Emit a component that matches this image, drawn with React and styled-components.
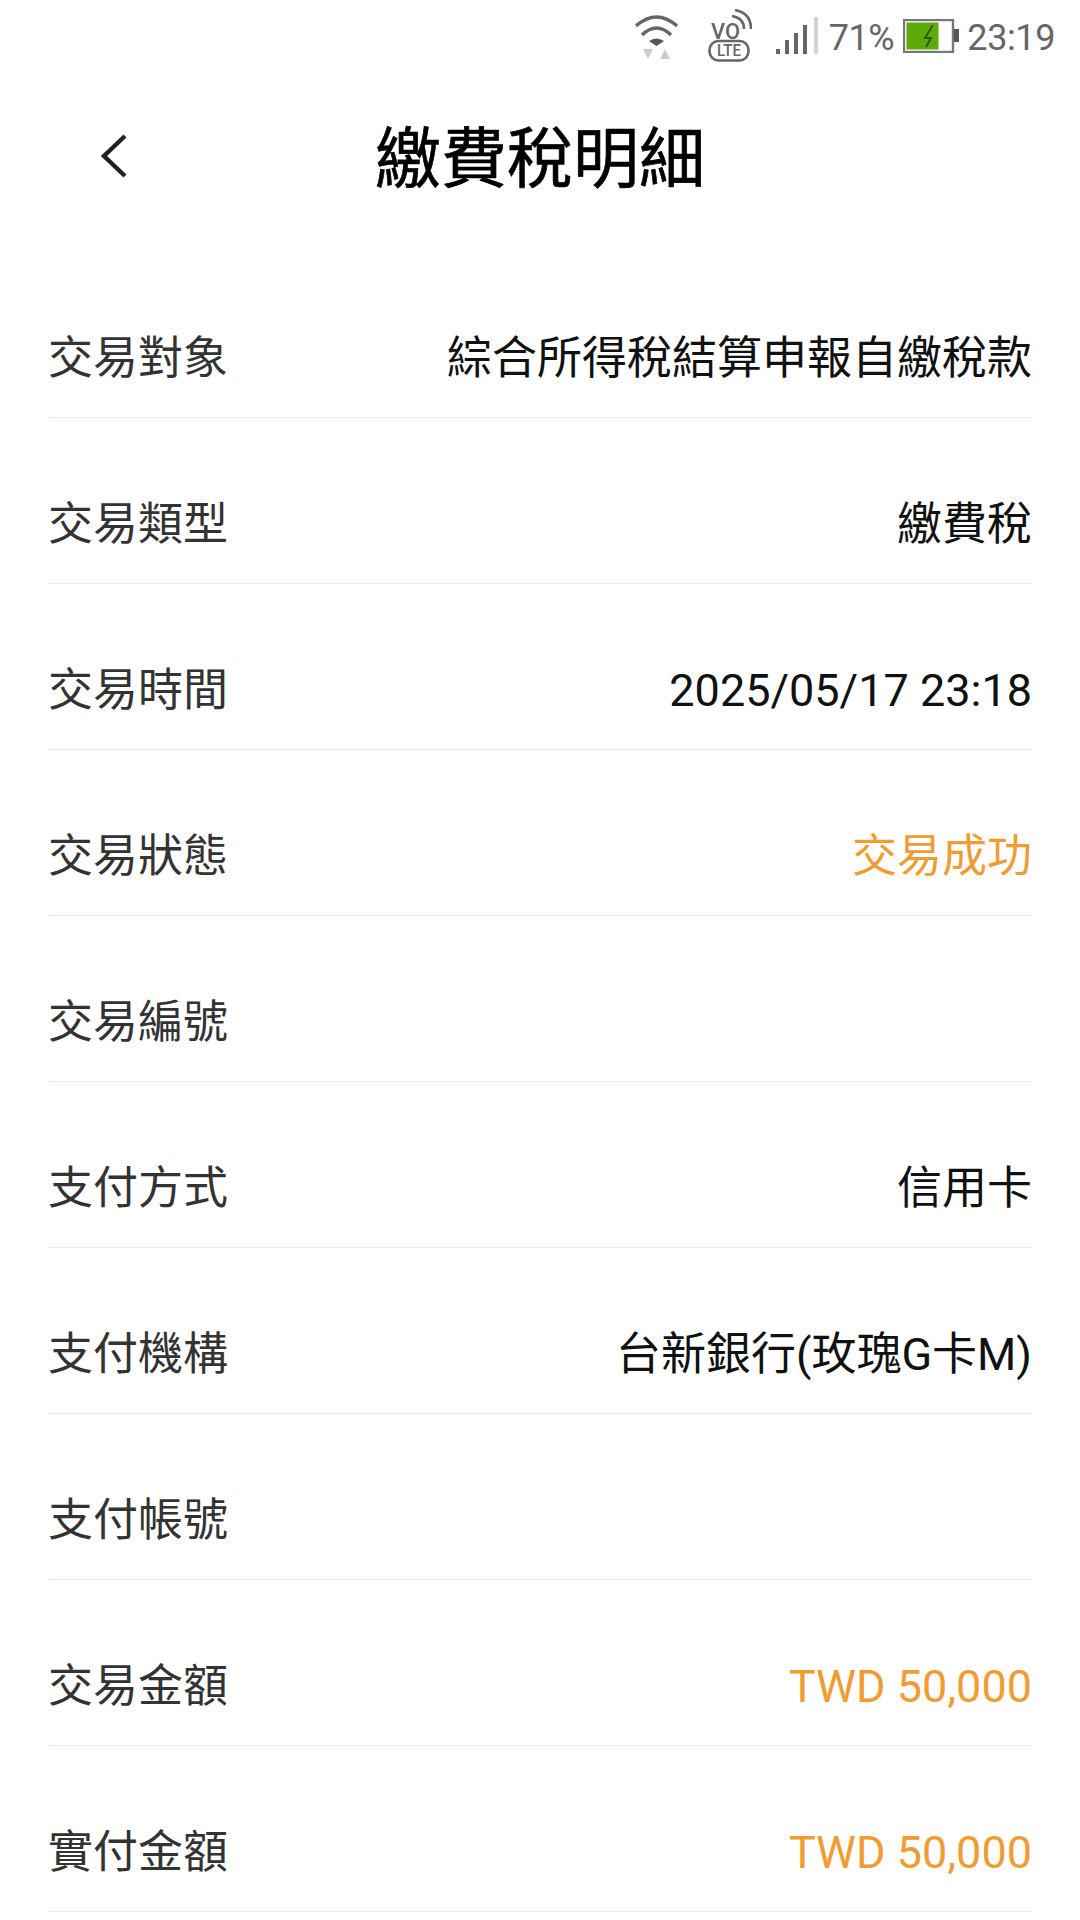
import React from "react";
import styled, { createGlobalStyle } from "styled-components";

const Global = createGlobalStyle`
  html, body { margin: 0; padding: 0; background: #fff; }
  body { font-family: Roboto, "Noto Sans CJK TC", sans-serif; }
`;
const Page = styled.div`
  width: 1080px;
  height: 1920px;
  overflow: hidden;
  background: #fff;
  display: flex;
  flex-direction: column;
`;
const StatusBar = styled.div`
  height: 64px;
  padding-right: 25px;
  display: flex;
  justify-content: flex-end;
  align-items: flex-start;
  color: #666;
  font-size: 36px;
`;
const StatusIcon = styled.svg`
  display: block;
  flex: none;
  margin-left: ${(p) => p.$ml || 0}px;
  margin-top: ${(p) => p.$mt || 0}px;
`;
const StatusText = styled.span`
  margin-left: ${(p) => p.$ml || 0}px;
  margin-top: 16px;
  line-height: 44px;
  letter-spacing: -0.4px;
`;
const Header = styled.div`
  height: 184px;
  padding-left: 101px;
  display: flex;
  align-items: center;
  position: relative;
`;
const Title = styled.h1`
  margin: 0;
  position: absolute;
  left: 0;
  right: 0;
  top: 0;
  text-align: center;
  font-size: 66px;
  line-height: 191px;
  font-weight: 400;
  -webkit-text-stroke: 0.7px #000;
  color: #000;
`;
const List = styled.div`
  margin: 4px 48px 0 49px;
  display: flex;
  flex-direction: column;
`;
const Row = styled.div`
  height: 125px;
  padding-top: 40px;
  border-bottom: 1px solid #e9e9e9;
  display: flex;
  align-items: center;
  justify-content: space-between;
  font-size: 45px;
`;
const Label = styled.span`
  margin-left: -1px;
  color: #333;
`;
const Value = styled.span`
  margin-top: ${(p) => (p.$latin ? 8 : 0)}px;
  color: ${(p) => (p.$accent ? "#f09c33" : "#111")};
`;

const rows = [
  { label: "交易對象", value: "綜合所得稅結算申報自繳稅款" },
  { label: "交易類型", value: "繳費稅" },
  { label: "交易時間", value: "2025/05/17 23:18", latin: true },
  { label: "交易狀態", value: "交易成功", accent: true },
  { label: "交易編號", value: "" },
  { label: "支付方式", value: "信用卡" },
  { label: "支付機構", value: "台新銀行(玫瑰G卡M)" },
  { label: "支付帳號", value: "" },
  { label: "交易金額", value: "TWD 50,000", accent: true, latin: true },
  { label: "實付金額", value: "TWD 50,000", accent: true, latin: true },
];

const Wifi = () => (
  <StatusIcon $mt={15} width="43" height="44" viewBox="0 0 43 44" fill="none">
    <path d="M1 11 Q21.5 -7 42 11" stroke="#666" strokeWidth="3.4" />
    <path d="M7 20 Q21.5 6 36 20" stroke="#666" strokeWidth="3.4" />
    <path d="M21.5 31 L14 26 Q21.5 21 29 26 Z" fill="#555" />
    <path d="M8 34 H18 L13 44 Z M30 34 L35 44 H25 Z" fill="#ccc" />
  </StatusIcon>
);
const VoLte = () => (
  <StatusIcon $ml={30} $mt={9} width="44" height="53" viewBox="0 0 44 53" fill="none">
    <text x="3" y="30" fontFamily="Roboto" fontSize="22" fontWeight="500" fill="#666" textLength="29" lengthAdjust="spacingAndGlyphs">VO</text>
    <path d="M24 7 Q36 9 36 20 M27 1 Q43 4 43 20" stroke="#666" strokeWidth="2.6" />
    <rect x="1.5" y="32" width="39" height="19.5" rx="9" stroke="#666" strokeWidth="2.6" />
    <text x="9" y="47" fontFamily="Roboto" fontSize="16" fontWeight="500" fill="#666" textLength="24" lengthAdjust="spacingAndGlyphs">LTE</text>
  </StatusIcon>
);
const Signal = () => (
  <StatusIcon $ml={24} $mt={17} width="42" height="37" viewBox="0 0 42 37">
    <rect x="0" y="32" width="4" height="5" fill="#666" />
    <rect x="9" y="23" width="4" height="14" fill="#666" />
    <rect x="18" y="16" width="4" height="21" fill="#666" />
    <rect x="27" y="8" width="4" height="29" fill="#666" />
    <rect x="38" y="0" width="4" height="37" fill="#d4d4d4" />
  </StatusIcon>
);
const Battery = () => (
  <StatusIcon $ml={9} $mt={19} width="56" height="34" viewBox="0 0 56 34">
    <rect x="1" y="1" width="49" height="32" fill="#fff" stroke="#777" strokeWidth="2.4" />
    <rect x="3.5" y="3.5" width="32" height="27" fill="#5dab0a" />
    <rect x="51" y="10" width="5" height="13" fill="#555" />
    <path d="M30 6 L22 19 H28 L23 28" stroke="#2f5c0a" strokeWidth="2" fill="none" />
  </StatusIcon>
);

export default function App() {
  return (
    <Page>
      <Global />
      <StatusBar>
        <Wifi />
        <VoLte />
        <Signal />
        <StatusText $ml={11}>71%</StatusText>
        <Battery />
        <StatusText $ml={8}>23:19</StatusText>
      </StatusBar>
      <Header>
        <svg width="26" height="44" viewBox="0 0 26 44" fill="none">
          <path d="M24 2 L3 22 L24 42" stroke="#222" strokeWidth="4.4" />
        </svg>
        <Title>繳費稅明細</Title>
      </Header>
      <List>
        {rows.map((r) => (
          <Row key={r.label}>
            <Label>{r.label}</Label>
            <Value $accent={r.accent} $latin={r.latin}>{r.value}</Value>
          </Row>
        ))}
      </List>
    </Page>
  );
}
